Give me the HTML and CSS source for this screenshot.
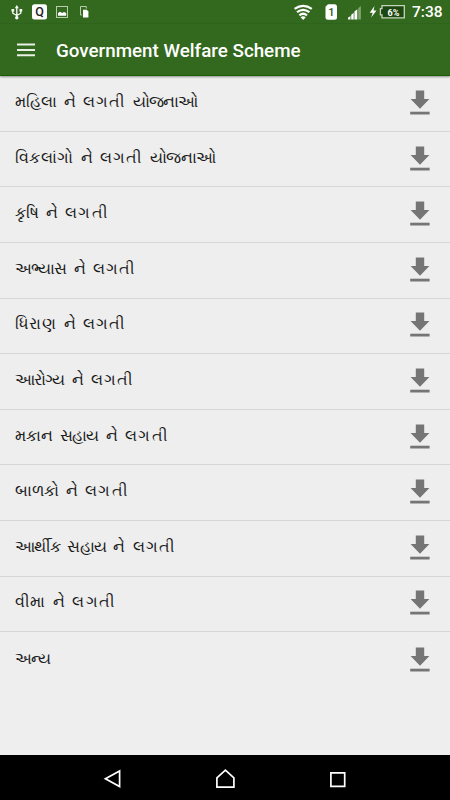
FILE: index.html
```html
<!DOCTYPE html>
<html lang="gu">
<head>
<meta charset="utf-8">
<title>Government Welfare Scheme</title>
<link rel="stylesheet" href="styles.css">
</head>
<body>
<svg class="defs" aria-hidden="true"><symbol id="download" viewBox="0 0 20 26"><path d="M5.8 0.5h8.4v8.5h5.2L10 18.7.6 9h5.2z"/><path d="M.2 21.7h19.4v2.8H.2z"/></symbol></svg>
<div class="screen">
  <header class="header">
    <div class="status">
      <svg class="notifications" width="100" height="24" viewBox="0 0 100 24">
        <g fill="none" stroke="#fff" stroke-width="1.3"><path d="M16.8 8v10M12.8 10v3.2l4 2.3M20.8 10v3.2l-4 2.3"/></g>
        <path fill="#fff" d="M16.8 5l2 3.2h-4zM11.5 9h2.7v2.5h-2.7zM19.5 9h2.7v2.5h-2.7z"/><circle cx="16.8" cy="17.8" r="1.7" fill="#fff"/>
        <rect x="32" y="4.2" width="15" height="15.4" rx="2.5" fill="#fff"/>
        <text class="badge" x="39.5" y="16" text-anchor="middle">Q</text>
        <rect x="56.5" y="6.5" width="11" height="11" fill="none" stroke="#b9cdae"/>
        <path fill="#fff" d="M58 15.7v-2.8l2-1.2 2.2 1.4 1.8-1.2 2.2 1.2v2.6z"/>
        <path d="M82 15h-1.5V6.5h5.8v2" fill="none" stroke="#b9cdae"/>
        <path fill="#fff" d="M83 9.7h3.8l1.6 1.8v6H83z"/>
      </svg>
      <svg class="indicators" width="114" height="24" viewBox="292 0 114 24">
        <g fill="none" stroke="#fff" stroke-width="2.3"><path d="M294.6 8.9q8.6-6 17.2 0M297 12.2q6.2-4.6 12.4 0M299.4 15.3q3.8-3 7.6 0"/></g>
        <path fill="#fff" d="M300.6 17.3q2.6-2 5.2 0l-2.6 2.8z"/>
        <path fill="#fff" d="M328 4.2h6.5q2.5 0 2.5 2.5v10.5q0 2.5-2.5 2.5H328q-2.5 0-2.5-2.5V6.8z"/>
        <text class="sim" x="331.3" y="16.4" text-anchor="middle">1</text>
        <path fill="#fff" d="M348 19.5v-1.8l2.5-1.8v3.6zM351.2 19.5v-4.7l2.5-2v6.7zM354.4 19.5v-7.9l2.9-2.4v10.3z"/>
        <path fill="#83a56f" d="M358.2 19.5V8.3l2.7-2.2v13.4z"/>
        <path fill="#fff" d="M374.5 6l-4.8 6.7h3l-1.5 4.8 5.3-7h-3z"/>
        <path d="M382 5.7h22.3v12.1H382v-3h-1.6V8.7h1.6z" fill="#1c4710" stroke="#c5d4bd" stroke-width="1.3"/>
        <text class="charge" x="393.4" y="15.6" text-anchor="middle">6%</text>
      </svg>
      <span class="clock">7:38</span>
    </div>
    <div class="toolbar">
      <svg class="menu" width="18" height="14" viewBox="0 0 18 14"><path stroke="#e9f0e6" stroke-width="2" d="M0 1.6h18M0 6.9h18M0 12.2h18"/></svg>
      <h1>Government Welfare Scheme</h1>
    </div>
  </header>
  <main class="list">
    <div class="row"><span>મહિલા ને <b>લગતી</b> <i>યોજનાઓ</i></span><svg class="dl"><use href="#download"/></svg></div>
    <div class="row"><span><em>વિકલાંગો</em> ને <b>લગતી</b> <i>યોજનાઓ</i></span><svg class="dl"><use href="#download"/></svg></div>
    <div class="row"><span>કૃષિ ને <b>લગતી</b></span><svg class="dl"><use href="#download"/></svg></div>
    <div class="row"><span><i>અભ્યાસ</i> ને <b>લગતી</b></span><svg class="dl"><use href="#download"/></svg></div>
    <div class="row"><span><em>ધિરાણ</em> ને <b>લગતી</b></span><svg class="dl"><use href="#download"/></svg></div>
    <div class="row"><span><i>આરોગ્ય</i> ને <b>લગતી</b></span><svg class="dl"><use href="#download"/></svg></div>
    <div class="row"><span>મકાન <i>સહાય</i> ને <b>લગતી</b></span><svg class="dl"><use href="#download"/></svg></div>
    <div class="row"><span>બાળકો ને <b>લગતી</b></span><svg class="dl"><use href="#download"/></svg></div>
    <div class="row"><span><i>આર્થીક</i> <i>સહાય</i> ને <b>લગતી</b></span><svg class="dl"><use href="#download"/></svg></div>
    <div class="row"><span><em>વીમા</em> ને <b>લગતી</b></span><svg class="dl"><use href="#download"/></svg></div>
    <div class="row"><span><i>અન્ય</i></span><svg class="dl"><use href="#download"/></svg></div>
  </main>
  <nav class="nav">
    <svg width="18" height="20" viewBox="0 0 18 20"><path d="M16.6 2v15.6L2.4 9.8z"/></svg>
    <svg width="20" height="20" viewBox="0 0 20 20"><path d="M1.9 18.2V8.8L10.4 1.2l8.5 7.6v9.4z"/></svg>
    <svg width="18" height="20" viewBox="0 0 18 20"><path d="M1.9 3.9h13.8v13.4H1.9z"/></svg>
  </nav>
</div>
</body>
</html>
```
FILE: styles.css
```css
* { box-sizing: border-box; }
body { margin: 0; background: #eee; font-family: Roboto, "Noto Sans", sans-serif; }
.defs { display: none; }
.screen { width: 450px; height: 800px; display: flex; flex-direction: column; overflow: hidden; background: #eee; }
.header { height: 76px; flex: none; background: #33691e; border-bottom: 1px solid #176000; box-shadow: 0 1px 2px #0006; color: #fff; }
.status { height: 24px; display: flex; align-items: center; border-bottom: 1px solid #2d631a; }
.notifications { flex: none; }
.indicators { margin-left: 192px; flex: none; }
.badge { font: 500 12.5px Roboto, sans-serif; fill: #222; }
.sim { font: 500 11px Roboto, sans-serif; fill: #24551a; }
.charge { font: 700 9px Roboto, sans-serif; fill: #fff; }
.clock { margin-left: 6px; padding-top: 1px; font-size: 15.5px; font-weight: 500; line-height: 24px; }
.toolbar { height: 51px; display: flex; align-items: center; padding-left: 17px; }
.menu { flex: none; }
h1 { margin: 2px 0 0 21px; font-size: 18.8px; font-weight: 500; line-height: 24px; white-space: nowrap; }
.list { flex: 1; padding-top: .3px; }
.row { height: 55.6px; display: flex; align-items: center; justify-content: space-between; padding: 0 20px 0 14.5px; border-bottom: 1px solid #d6d6d6; color: #1c1c1c; font-size: 16.4px; word-spacing: 3.2px; }
.row:last-child { border-bottom: 0; }
.row span { line-height: 24px; padding-bottom: 3px; white-space: nowrap; }
.row b, .row i, .row em { font-weight: 400; font-style: normal; }
.row b { letter-spacing: .8px; }
.row b:last-child { letter-spacing: 1.3px; }
.row em { letter-spacing: .6px; }
.row i { letter-spacing: -.8px; }
.dl { width: 20px; height: 26px; fill: #757575; flex: none; margin-bottom: 1px; }
.nav { height: 45px; flex: none; background: #000; display: flex; justify-content: center; align-items: center; gap: 94px; padding-top: 3px; }
.nav svg { fill: none; stroke: #fff; stroke-width: 1.7; }
```
